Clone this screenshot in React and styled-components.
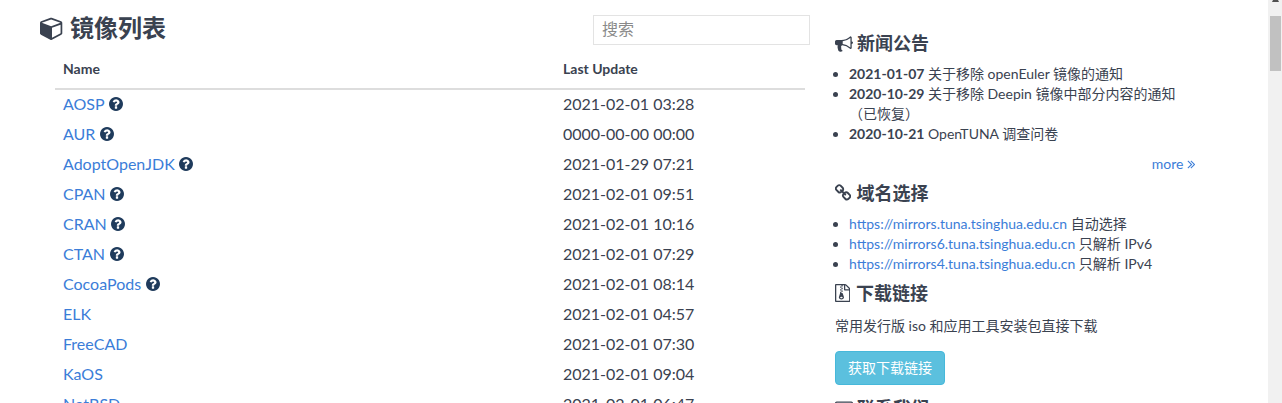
import React from "react";
import styled, { createGlobalStyle } from "styled-components";

const Global = createGlobalStyle`
  body {
    margin: 0;
    font-family: Lato, "Noto Sans CJK SC", sans-serif;
    font-size: 14px;
    line-height: 20px;
    color: #3a4250;
    background: #fff;
  }
`;

const PATHS = {
  cube: "M896 1629l640-349v-636l-640 233v752zm-64-865l698-254-698-254-698 254zm832-252v768q0 35-18 65t-49 47l-704 384q-28 16-61 16t-61-16l-704-384q-31-17-49-47t-18-65v-768q0-40 23-73t61-47l704-256q22-8 44-8t44 8l704 256q38 14 61 47t23 73z",
  bullhorn: "M1664 736q53 0 90.5 37.5t37.5 90.5-37.5 90.5-90.5 37.5v384q0 52-38 90t-90 38q-417-347-812-380-58 19-91 66t-31 100.5 40 92.5q-20 33-23 65.5t6 58 33.5 55 48 50 61.5 50.5q-29 58-111.5 83t-168.5 11.5-132-55.5q-7-23-29.5-87.5t-32-94.5-23-89-15-101 3.5-98.5 22-110.5h-122q-66 0-113-47t-47-113v-192q0-66 47-113t113-47h480q435 0 896-384 52 0 90 38t38 90v384zm-128 604v-954q-394 302-768 343v270q377 42 768 341z",
  link: "M1520 1216q0-40-28-68l-208-208q-28-28-68-28-42 0-72 32 3 3 19 18.5t21.5 21.5 15 19 13 25.5 3.5 27.5q0 40-28 68t-68 28q-15 0-27.5-3.5t-25.5-13-19-15-21.5-21.5-18.5-19q-33 31-33 73 0 40 28 68l206 207q27 27 68 27 40 0 68-26l147-146q28-28 28-67zm-703-705q0-40-28-68l-206-207q-28-28-68-28-39 0-68 27l-147 146q-28 28-28 67 0 40 28 68l208 208q27 27 68 27 42 0 72-31-3-3-19-18.5t-21.5-21.5-15-19-13-25.5-3.5-27.5q0-40 28-68t68-28q15 0 27.5 3.5t25.5 13 19 15 21.5 21.5 18.5 19q33-31 33-73zm895 705q0 120-85 203l-147 146q-83 83-203 83-121 0-204-85l-206-207q-83-83-83-203 0-123 88-209l-88-88q-86 88-208 88-120 0-204-84l-208-208q-84-84-84-204t85-203l147-146q83-83 203-83 121 0 204 85l206 207q83 83 83 203 0 123-88 209l88 88q86-88 208-88 120 0 204 84l208 208q84 84 84 204z",
  archive: "M768 384v-128h-128v128h128zm128 128v-128h-128v128h128zm-128 128v-128h-128v128h128zm128 128v-128h-128v128h128zm700-388q28 28 48 76t20 88v1152q0 40-28 68t-68 28h-1344q-40 0-68-28t-28-68v-1600q0-40 28-68t68-28h896q40 0 88 20t76 48zm-444-244v376h376q-10-29-22-41l-313-313q-12-12-41-22zm384 1528v-1024h-416q-40 0-68-28t-28-68v-416h-128v128h-128v-128h-512v1536h1280zm-627-721l107 349q8 27 8 52 0 83-72.5 137.5t-183.5 54.5-183.5-54.5-72.5-137.5q0-25 8-52 21-63 120-396v-128h128v128h79q22 0 39 13t23 34zm-141 465q53 0 90.5-19t37.5-45-37.5-45-90.5-19-90.5 19-37.5 45 37.5 45 90.5 19z",
  envelope: "M1664 1504v-768q-32 36-69 66-268 206-426 338-51 43-83 67t-86.5 48.5-102.5 24.5h-2q-48 0-102.5-24.5t-86.5-48.5-83-67q-158-132-426-338-37-30-69-66v768q0 13 9.5 22.5t22.5 9.5h1472q13 0 22.5-9.5t9.5-22.5zm0-1051v-24.5l-.5-13-3-12.5-5.5-9-9-7.5-14-2.5h-1472q-13 0-22.5 9.5t-9.5 22.5q0 168 147 284 193 152 401 317 6 5 35 29.5t46 37.5 44.5 31.5 50.5 27.5 43 9h2q20 0 43-9t50.5-27.5 44.5-31.5 46-37.5 35-29.5q208-165 401-317 54-43 100.5-115.5t46.5-131.5zm128-37v1088q0 66-47 113t-113 47h-1472q-66 0-113-47t-47-113v-1088q0-66 47-113t113-47h1472q66 0 113 47t47 113z",
  help: "M1024 1376v-192q0-14-9-23t-23-9h-192q-14 0-23 9t-9 23v192q0 14 9 23t23 9h192q14 0 23-9t9-23zm256-672q0-88-55.5-163t-138.5-116-170-41q-243 0-371 213-15 24 8 42l132 100q7 6 19 6 16 0 25-12 53-68 86-92 34-24 86-24 48 0 85.5 26t37.5 59q0 38-20 61t-68 45q-63 28-115.5 86.5t-52.5 125.5v36q0 14 9 23t23 9h192q14 0 23-9t9-23q0-19 21.5-49.5t54.5-49.5q32-18 49-28.5t46-35 44.5-48 28-60.5 12.5-81zm384 192q0 209-103 385.5t-279.5 279.5-385.5 103-385.5-103-279.5-279.5-103-385.5 103-385.5 279.5-279.5 385.5-103 385.5 103 279.5 279.5 103 385.5z",
  more: "M979 960q0 13-10 23l-466 466q-10 10-23 10t-23-10l-50-50q-10-10-10-23t10-23l393-393-393-393q-10-10-10-23t10-23l50-50q10-10 23-10t23 10l466 466q10 10 10 23zm384 0q0 13-10 23l-466 466q-10 10-23 10t-23-10l-50-50q-10-10-10-23t10-23l393-393-393-393q-10-10-10-23t10-23l50-50q10-10 23-10t23 10l466 466q10 10 10 23z",
};

const Fa = ({ name, box = "0 0 1792 1792", className }) => (
  <svg className={className} viewBox={box} fill="currentColor" aria-hidden="true">
    <path d={PATHS[name]} />
  </svg>
);

const Page = styled.div`
  display: flex;
  align-items: flex-start;
  gap: 25px;
  padding-left: 40px;
  min-height: 2733px;
  box-sizing: border-box;
`;
const Main = styled.main`
  width: 770px;
  flex: none;
`;
const TitleRow = styled.div`
  display: flex;
  justify-content: space-between;
  align-items: flex-start;
  height: 49px;
  padding-top: 15px;
  box-sizing: border-box;
`;
const Title = styled.h1`
  margin: 0;
  height: 26px;
  font-size: 24px;
  line-height: 26px;
  font-weight: 700;
  display: flex;
  align-items: center;
  gap: 6px;
`;
const TitleIcon = styled(Fa)`
  width: 24px;
  height: 24px;
`;
const Search = styled.input`
  width: 217px;
  height: 30px;
  box-sizing: border-box;
  border: 1px solid #e3e3e3;
  padding: 0 8px 4px;
  font: inherit;
  font-size: 16px;
  color: #3a4250;
  outline: none;
  &::placeholder { color: #8a8a8a; opacity: 1; }
`;
const Table = styled.table`
  width: 750px;
  margin-left: 15px;
  border-collapse: separate;
  border-spacing: 0;
  table-layout: fixed;
`;
const Head = styled.th`
  height: 41px;
  padding: 0 8px;
  box-sizing: border-box;
  text-align: left;
  font-size: 14px;
  font-weight: 700;
  border-bottom: 2px solid #ddd;
  width: ${(p) => p.$w};
`;
const Cell = styled.td`
  height: 30px;
  padding: 0 8px 2px;
  box-sizing: border-box;
  font-size: 16px;
  line-height: 20px;
`;
const NameLink = styled.a`
  color: #3b7dd8;
  text-decoration: none;
`;
const Help = styled(Fa)`
  width: 14px;
  height: 14px;
  margin-left: 4.5px;
  color: #1f3b5c;
  vertical-align: -1px;
`;
const Side = styled.aside`
  width: 360px;
  flex: none;
  padding-top: 33px;
`;
const SideTitle = styled.h4`
  margin: ${(p) => p.$top || 0}px 0 0;
  font-size: 18px;
  line-height: 20px;
  font-weight: 700;
  display: flex;
  align-items: center;
  gap: ${(p) => p.$gap}px;
`;
const SideIcon = styled(Fa)`
  width: ${(p) => p.$w}px;
  height: 18px;
  flex: none;
`;
const List = styled.ul`
  margin: ${(p) => p.$top}px 0 0;
  padding: 0 0 0 14px;
`;
const More = styled.a`
  display: flex;
  justify-content: flex-end;
  align-items: center;
  gap: 3px;
  margin-top: 10px;
  color: #3b7dd8;
  text-decoration: none;
`;
const MoreIcon = styled(Fa)`
  width: 8.5px;
  height: 14px;
`;
const Url = styled.a`
  color: #3b7dd8;
  text-decoration: none;
`;
const Para = styled.p`
  margin: 13px 0 0;
`;
const InfoButton = styled.button`
  display: block;
  width: 110px;
  height: 34px;
  margin-top: 15px;
  padding: 0;
  border: 1px solid #46b8da;
  border-radius: 4px;
  background: #5bc0de;
  color: #fff;
  font: inherit;
  font-size: 14px;
`;
const ScrollTrack = styled.div`
  position: fixed;
  top: 0;
  right: 0;
  bottom: 0;
  width: 14px;
  background: #f1f1f1;
`;
const ScrollArrow = styled.svg`
  position: absolute;
  top: 0;
  left: 4px;
  width: 7px;
  height: 2px;
  fill: #505050;
`;
const ScrollThumb = styled.div`
  position: absolute;
  top: 16px;
  left: 2px;
  width: 11px;
  height: 55px;
  background: #c1c1c1;
`;

const rows = [
  ["AOSP", "2021-02-01 03:28", true],
  ["AUR", "0000-00-00 00:00", true],
  ["AdoptOpenJDK", "2021-01-29 07:21", true],
  ["CPAN", "2021-02-01 09:51", true],
  ["CRAN", "2021-02-01 10:16", true],
  ["CTAN", "2021-02-01 07:29", true],
  ["CocoaPods", "2021-02-01 08:14", true],
  ["ELK", "2021-02-01 04:57", false],
  ["FreeCAD", "2021-02-01 07:30", false],
  ["KaOS", "2021-02-01 09:04", false],
  ["NetBSD", "2021-02-01 06:47", false],
];

export default function App() {
  return (
    <>
      <Global />
      <Page>
        <Main>
          <TitleRow>
            <Title><TitleIcon name="cube" />镜像列表</Title>
            <Search placeholder="搜索" />
          </TitleRow>
          <Table>
            <thead>
              <tr>
                <Head $w="500px">Name</Head>
                <Head $w="250px">Last Update</Head>
              </tr>
            </thead>
            <tbody>
              {rows.map(([name, date, help]) => (
                <tr key={name}>
                  <Cell>
                    <NameLink href="#">{name}</NameLink>
                    {help && <Help name="help" box="128 128 1536 1536" />}
                  </Cell>
                  <Cell>{date}</Cell>
                </tr>
              ))}
            </tbody>
          </Table>
        </Main>
        <Side>
          <SideTitle $gap={4}><SideIcon name="bullhorn" $w={18} />新闻公告</SideTitle>
          <List $top={11}>
            <li><b>2021-01-07</b> 关于移除 openEuler 镜像的通知</li>
            <li><b>2020-10-29</b> 关于移除 Deepin 镜像中部分内容的通知（已恢复）</li>
            <li><b>2020-10-21</b> OpenTUNA 调查问卷</li>
          </List>
          <More href="#">more<MoreIcon name="more" box="320 0 1088 1792" /></More>
          <SideTitle $top={9} $gap={5}><SideIcon name="link" box="96 0 1632 1792" $w={16.4} />域名选择</SideTitle>
          <List $top={11}>
            <li><Url href="#">https://mirrors.tuna.tsinghua.edu.cn</Url> 自动选择</li>
            <li><Url href="#">https://mirrors6.tuna.tsinghua.edu.cn</Url> 只解析 IPv6</li>
            <li><Url href="#">https://mirrors4.tuna.tsinghua.edu.cn</Url> 只解析 IPv4</li>
          </List>
          <SideTitle $top={9} $gap={5.6}><SideIcon name="archive" box="128 0 1536 1792" $w={15.4} />下载链接</SideTitle>
          <Para>常用发行版 iso 和应用工具安装包直接下载</Para>
          <InfoButton>获取下载链接</InfoButton>
          <SideTitle $top={13} $gap={4}><SideIcon name="envelope" $w={18} />联系我们</SideTitle>
        </Side>
      </Page>
      <ScrollTrack>
        <ScrollArrow viewBox="0 0 7 2"><polygon points="1,0 6,0 7,2 0,2" /></ScrollArrow>
        <ScrollThumb />
      </ScrollTrack>
    </>
  );
}
